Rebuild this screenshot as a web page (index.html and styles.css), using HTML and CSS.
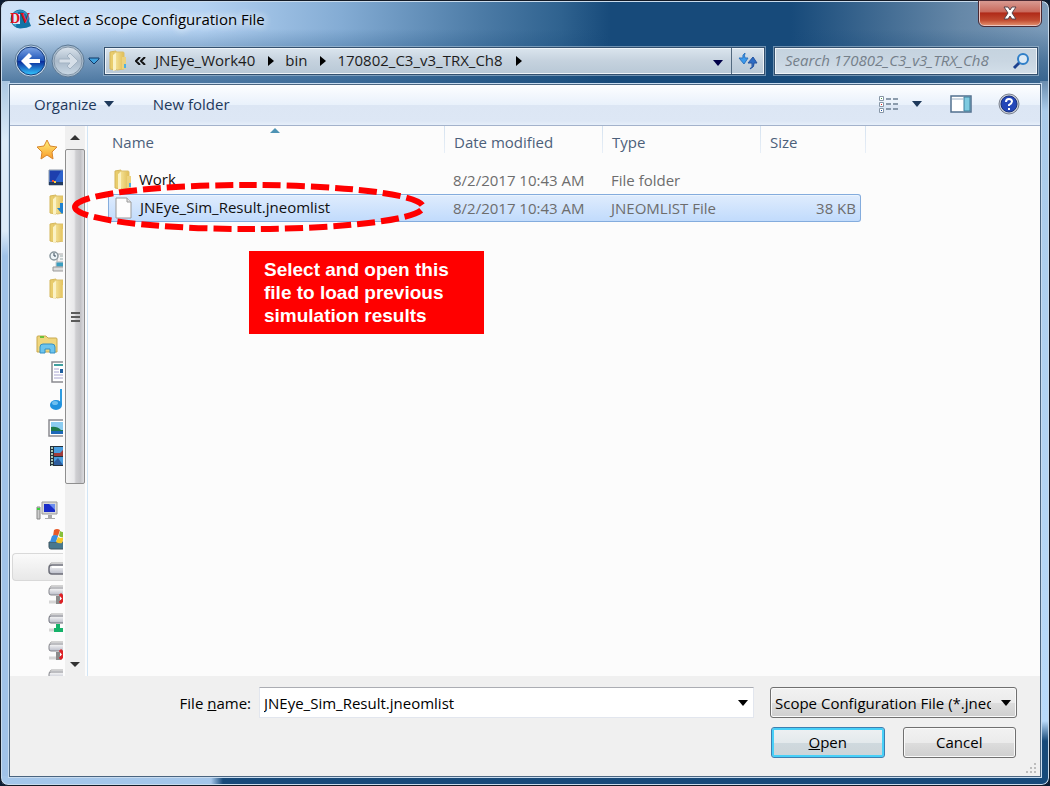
FILE: index.html
```
<!DOCTYPE html>
<html lang="en">
<head>
	<meta charset="UTF-8">
	<title>Select a Scope Configuration File</title>
	<link rel="stylesheet" href="styles.css">
</head>
<body>

<!-- shared icons -->
<svg class="defs" width="0" height="0" aria-hidden="true">
	<defs>
		<linearGradient id="gFolder" x1="0" x2="1"><stop offset="0" stop-color="#f7e7a0"/><stop offset="1" stop-color="#e0bd55"/></linearGradient>
		<linearGradient id="gBlue" x1="0" y1="0" x2="0" y2="1"><stop offset="0" stop-color="#7fa6e6"/><stop offset=".48" stop-color="#1f55b8"/><stop offset=".52" stop-color="#0a2c9c"/><stop offset="1" stop-color="#35c8ff"/></linearGradient>
		<linearGradient id="gGrey" x1="0" y1="0" x2="0" y2="1"><stop offset="0" stop-color="#dce5ee"/><stop offset=".5" stop-color="#a9b9c9"/><stop offset="1" stop-color="#c9d8e5"/></linearGradient>
		<linearGradient id="gStar" x1="0" y1="0" x2="0" y2="1"><stop offset="0" stop-color="#fff27a"/><stop offset="1" stop-color="#f99a2a"/></linearGradient>
		<linearGradient id="gDrive" x1="0" y1="0" x2="0" y2="1"><stop offset="0" stop-color="#fafafa"/><stop offset="1" stop-color="#b9bcc8"/></linearGradient>
	</defs>
	<symbol id="folder" viewBox="0 0 20 22">
		<path d="M2 2 8 1v19l-6-1z" fill="#e9cd6c" stroke="#d5b75a"/>
		<path d="M6 2h9q1 0 1 1v16l-7 1-3-2z" fill="url(#gFolder)" stroke="#dcc06a"/>
		<path d="M8 3v17l-3 1V5z" fill="#fbf2c4"/>
		<path d="M14 7h4v12h-4z" fill="#ecd27d"/>
		<path d="M16 14h2v4h-2z" fill="#4fb0e0"/>
	</symbol>
	<symbol id="drive" viewBox="0 0 22 22">
		<path d="M3 6h18v3H1z" fill="#f4f4f6" stroke="#aaa"/>
		<rect x="1" y="8" width="22" height="9" rx="3" fill="url(#gDrive)" stroke="#6c6e78" stroke-width="1.5"/>
		<path d="M4 10h18" stroke="#fff" stroke-width="2"/>
	</symbol>
	<symbol id="netoff" viewBox="0 0 22 22">
		<path d="M3 2h19v3H1z" fill="#f4f4f6" stroke="#aaa"/>
		<rect x="1" y="4" width="22" height="7" rx="2" fill="url(#gDrive)" stroke="#85868c"/>
		<path d="M10 12v5M8 18h5" stroke="#8b8b8b" stroke-width="4"/>
		<path d="M1 18h7" stroke="#d5d5d5" stroke-width="3"/>
		<path d="m12 10 8 9m0-9-8 9" stroke="#de2025" stroke-width="3"/>
	</symbol>
	<symbol id="neton" viewBox="0 0 22 22">
		<path d="M3 2h19v3H1z" fill="#f4f4f6" stroke="#aaa"/>
		<rect x="1" y="4" width="22" height="7" rx="2" fill="url(#gDrive)" stroke="#6c6e78"/>
		<path d="M10 12v5M6 18h14" stroke="#16b26a" stroke-width="4"/>
		<path d="M1 18h5" stroke="#d5d5d5" stroke-width="3"/>
	</symbol>
</svg>

<div class="window">
	<div class="titlebar">
		<svg class="app-icon" width="22" height="20" viewBox="0 0 22 20">
			<ellipse cx="10" cy="10" rx="9" ry="9" fill="#3ba0cc" stroke="#1c76a4"/>
			<path d="M8 3q6-2 9 4l4 10q-8 4-15 1z" fill="#1273a6"/>
			<path d="M2 5h8v10H3z" fill="#d9edf5"/>
			<text x="0" y="14" class="logo-text">DV</text>
		</svg>
		<h1>Select a Scope Configuration File</h1>
		<button class="close" aria-label="Close">
			<svg width="16" height="14" viewBox="0 0 16 14"><path d="M2 1h4l2 3 2-3h4l-4 6 4 6h-4l-2-3-2 3H2l4-6z" fill="#fff" stroke="#56434a"/></svg>
		</button>
	</div>

	<div class="navbar">
		<button class="round" aria-label="Back">
			<svg width="34" height="34" viewBox="0 0 34 34">
				<circle cx="17" cy="17" r="16" fill="#bfd4e8" stroke="#5b7894"/>
				<circle cx="17" cy="17" r="14" fill="url(#gBlue)" stroke="#173c7c"/>
				<path d="m7 17 8-8 3 3-3 3h11v4H15l3 3-3 3z" fill="#fff"/>
			</svg>
		</button>
		<button class="round" aria-label="Forward">
			<svg width="34" height="34" viewBox="0 0 34 34">
				<circle cx="17" cy="17" r="16" fill="#a9bccd" stroke="#5b7894"/>
				<circle cx="17" cy="17" r="14" fill="url(#gGrey)" stroke="#8496a8"/>
				<path d="m27 17-8-8-3 3 3 3H8v4h11l-3 3 3 3z" fill="#d6dfe8" stroke="#a3b3c3"/>
			</svg>
		</button>
		<button class="history" aria-label="Recent pages">
			<svg width="12" height="8" viewBox="0 0 12 8"><path d="M1 1h10v1L6 7 1 2z" fill="#3fa0dc" stroke="#123a68"/></svg>
		</button>
		<nav class="address">
			<svg class="addr-icon" width="20" height="22"><use href="#folder"/></svg>
			<svg class="more" width="11" height="8" viewBox="0 0 11 8"><path d="M5 0 1 4l4 4M10 0 6 4l4 4" fill="none" stroke="#111" stroke-width="2"/></svg>
			<a href="#">JNEye_Work40</a><i class="tri"></i>
			<a href="#">bin</a><i class="tri"></i>
			<a href="#">170802_C3_v3_TRX_Ch8</a><i class="tri"></i>
			<button class="addr-drop" aria-label="Previous locations"><i class="down"></i></button>
			<button class="refresh" aria-label="Refresh">
				<svg width="20" height="18" viewBox="0 0 20 18">
					<path d="M7 1Q4 3 5 6H1l5 6 4-6H7Q6 4 7 1z" fill="#3a9aee" stroke="#2c74c0"/>
					<path d="M12 17q3-2 2-6h-4l5-6 4 6h-3q1 4-4 6z" fill="#2c6cc4" stroke="#2353a0"/>
				</svg>
			</button>
		</nav>
		<div class="search">
			<input type="text" aria-label="Search" placeholder="Search 170802_C3_v3_TRX_Ch8">
			<svg width="18" height="18" viewBox="0 0 18 18">
				<path d="m2 16 6-6" stroke="#1c418f" stroke-width="3"/>
				<circle cx="11" cy="7" r="5" fill="#dbe9f5" stroke="#2f7fc8" stroke-width="2"/>
			</svg>
		</div>
	</div>

	<div class="client">
		<div class="toolbar">
			<button>Organize <i class="down"></i></button>
			<button>New folder</button>
			<button class="views" aria-label="Change your view">
				<svg width="20" height="17" viewBox="0 0 20 17">
					<g fill="#fff" stroke="#8796a6"><path d="M1.500.5h4v4h-4zM1.500 6.500h4v4h-4zM1.500 12.500h4v4h-4z"/></g>
					<path d="M3 2h1v1H3z" fill="#4a9a4a"/><path d="M3 8h1v1H3z" fill="#e02020"/><path d="M3 14h1v1H3z" fill="#2050a0"/>
					<path d="M8 3h5m2 0h5M8 8h5m2 0h5M8 13h5m2 0h5" stroke="#6c7f92" stroke-width="1.500"/>
				</svg>
				<i class="down"></i>
			</button>
			<button class="preview" aria-label="Show the preview pane">
				<svg width="22" height="18" viewBox="0 0 22 18">
					<path d="M1 1h20v16H1z" fill="#fff" stroke="#52708e" stroke-width="1.500"/>
					<path d="M2 4h11" stroke="#9cb0c4"/>
					<path d="M14 2h6v14h-6z" fill="#7fcbe0" stroke="#3f7f9c"/>
				</svg>
			</button>
			<button class="help" aria-label="Help">
				<svg width="22" height="22" viewBox="0 0 22 22">
					<circle cx="11" cy="11" r="10" fill="#c9cdd4" stroke="#7b8290"/>
					<circle cx="11" cy="11" r="8" fill="#2447b8" stroke="#17307e"/>
					<path d="M8 9q0-3 3-3t3 2.500q0 1.500-3 3.500v1" fill="none" stroke="#fff" stroke-width="2"/>
					<path d="M10 15h2v2h-2z" fill="#fff"/>
				</svg>
			</button>
		</div>

		<div class="panes">
			<div class="tree">
				<ul>
					<li class="root"><svg width="22" height="22" viewBox="0 0 22 22"><path d="m11 2 3 6 7 1-5 5 1 7-6-4-6 4 1-7-5-5 7-1z" fill="url(#gStar)" stroke="#d8862c"/></svg></li>
					<li><svg width="22" height="22" viewBox="0 0 22 22"><path d="M1 4h20v15H1z" fill="#2d62cc" stroke="#8a94a4"/><path d="M2 5h11L7 15H2z" fill="#1d3fae"/><path d="M1 16h20v3H1z" fill="#223a5e"/><path d="M4 14h2v2H4z" fill="#f05030"/><path d="M6 15h2v2H6z" fill="#f8d040"/></svg></li>
					<li><svg width="22" height="22" viewBox="0 0 22 22"><use href="#folder" width="20" height="22"/><path d="M12 9h4v5h3l-5 6-5-6h3z" fill="#1d80d0"/></svg></li>
					<li><svg width="22" height="22" viewBox="0 0 22 22"><use href="#folder" width="20" height="22"/></svg></li>
					<li><svg width="22" height="22" viewBox="0 0 22 22"><path d="M9 4h12v8H9z" fill="#f4f4f4" stroke="#aaa"/><path d="M12 6h8M12 9h8" stroke="#9aa"/><path d="M8 12h13v5H8z" fill="#3a9ec0" stroke="#ccc"/><path d="M5 17h16v4H5z" fill="#ddd" stroke="#999"/><circle cx="6" cy="6" r="4" fill="#eef5f8" stroke="#8a979e" stroke-width="1.500"/><path d="M6 3v3h2" fill="none" stroke="#345"/></svg></li>
					<li><svg width="22" height="22" viewBox="0 0 22 22"><use href="#folder" width="20" height="22"/></svg></li>
				</ul>
				<ul>
					<li class="root"><svg width="22" height="22" viewBox="0 0 22 22"><path d="M1 4q0-1 1-1h8l2 2h8q1 0 1 1v13H1z" fill="#efd67e" stroke="#c9a94e"/><path d="M4 4h4" stroke="#6cc03a" stroke-width="2"/><path d="M4 20v-6q0-3 3-3h9q3 0 3 3v6h-5v-4H9v4z" fill="#6cc4ee" stroke="#3490c4"/></svg></li>
					<li><svg width="22" height="22" viewBox="0 0 22 22"><path d="M4 1h18v20H4z" fill="#fff" stroke="#8a8a90" stroke-width="1.500"/><path d="M6 4h14" stroke="#40a0a0" stroke-width="2"/><path d="M6 8h5M6 11h5M6 14h14M6 17h14" stroke="#a8a4d0"/><path d="M12 8h8v4h-8z" fill="#2060a0"/></svg></li>
					<li><svg width="22" height="22" viewBox="0 0 22 22"><path d="M13 0v16" stroke="#2f9ce0" stroke-width="2"/><ellipse cx="8" cy="16" rx="6" ry="5" fill="#2192de"/><ellipse cx="7" cy="14" rx="3" ry="2" fill="#6fc0f0"/></svg></li>
					<li><svg width="22" height="22" viewBox="0 0 22 22"><path d="M1 3h22v16H1z" fill="#fff" stroke="#8a8a90" stroke-width="1.500"/><path d="M3 5h18v12H3z" fill="#8cccf0"/><path d="M3 10q6-1 10 3h8v2H3z" fill="#1e7a4a"/><path d="M3 14h18v3H3z" fill="#1d68b8"/></svg></li>
					<li><svg width="22" height="22" viewBox="0 0 22 22"><path d="M2 1h20v20H2z" fill="#25313c"/><path d="M6 2h14v8H6zM6 12h14v8H6z" fill="#4a9ee0"/><path d="M6 8h6l3-3v6H6z" fill="#a03c3c"/><path d="M6 17l4-4 5 7H6z" fill="#2d5c9c"/><path d="M4 2v19" stroke="#a8c8b8" stroke-width="2" stroke-dasharray="2 1"/></svg></li>
				</ul>
				<ul>
					<li class="root"><svg width="22" height="22" viewBox="0 0 22 22"><path d="M6 2h15v12H6z" fill="#d8d8d8" stroke="#999"/><path d="M8 4h11v8H8z" fill="#1a2cc8"/><path d="M13 4h6v6z" fill="#6a8cf0"/><path d="M12 15h4v3h3v1H9v-1h3z" fill="#aaa"/><path d="M1 7h3v12H1z" fill="#ccc" stroke="#888"/><path d="M1 9h3" stroke="#3ad03a" stroke-width="2"/></svg></li>
					<li><svg width="22" height="22" viewBox="0 0 22 22"><path d="M1 14h22v6q0 1-2 1H3q-2 0-2-2z" fill="#48788e" stroke="#3c5460"/><path d="M6 2q3-2 6 0l-2 6q-3-1-5 0z" fill="#e85a28"/><path d="M12 3q4 2 7 0l-2 6q-4 1-6-1z" fill="#86c03a"/><path d="M4 8q3-2 6 0l-2 6H2z" fill="#3a8ee0"/><path d="M10 9q3 2 6 0l-2 6q-3 1-6-1z" fill="#f8c828"/></svg></li>
					<li class="current"><svg width="22" height="22"><use href="#drive"/></svg></li>
					<li><svg width="22" height="22"><use href="#netoff"/></svg></li>
					<li><svg width="22" height="22"><use href="#neton"/></svg></li>
					<li><svg width="22" height="22"><use href="#netoff"/></svg></li>
					<li><svg width="22" height="22"><use href="#netoff"/></svg></li>
				</ul>
			</div>
			<div class="scrollbar">
				<i class="up"></i>
				<div class="thumb"><i></i><i></i><i></i></div>
				<i class="dn"></i>
			</div>

			<div class="files">
				<table>
					<colgroup><col class="c-name"><col class="c-date"><col class="c-type"><col class="c-size"></colgroup>
					<thead>
						<tr><th class="sorted">Name</th><th>Date modified</th><th>Type</th><th>Size</th></tr>
					</thead>
					<tbody>
						<tr>
							<td class="name"><svg width="20" height="22"><use href="#folder"/></svg>Work</td>
							<td>8/2/2017 10:43 AM</td><td>File folder</td><td class="size"></td>
						</tr>
						<tr class="selected">
							<td class="name"><svg width="20" height="22" viewBox="0 0 20 22"><path d="M2 1h11l4 4v16H2z" fill="#fdfdfd" stroke="#9a9a9a"/><path d="M13 1v4h4" fill="#e4e4e4" stroke="#9a9a9a"/></svg>JNEye_Sim_Result.jneomlist</td>
							<td>8/2/2017 10:43 AM</td><td>JNEOMLIST File</td><td class="size">38 KB</td>
						</tr>
					</tbody>
				</table>
				<svg class="ring" width="360" height="56" viewBox="0 0 360 56">
					<path d="M6 28A174 22 0 0 1 354 28A174 22 0 0 1 6 28" fill="none" stroke="#f00" stroke-width="6" stroke-dasharray="18 6"/>
				</svg>
				<p class="callout">Select and open this file to load previous simulation results</p>
			</div>
		</div>

		<form class="footer">
			<label for="filename">File <u>n</u>ame:</label>
			<div class="combo">
				<input type="text" id="filename" value="JNEye_Sim_Result.jneomlist">
				<button type="button" aria-label="Previous names"><i class="down"></i></button>
			</div>
			<div class="filter">
				<select aria-label="File type"><option>Scope Configuration File (*.jneomlist)</option></select>
				<i class="down"></i>
			</div>
			<div class="buttons">
				<button type="button" class="btn default"><u>O</u>pen</button>
				<button type="button" class="btn">Cancel</button>
			</div>
			<svg class="grip" width="11" height="11" viewBox="0 0 11 11"><path d="M8 0h2v2H8zM4 4h2v2H4zM8 4h2v2H8zM0 8h2v2H0zM4 8h2v2H4zM8 8h2v2H8z" fill="#bdbdbd"/></svg>
		</form>
	</div>
</div>

</body>
</html>
```
FILE: styles.css
```
* { box-sizing: border-box; }

body {
	margin: 0;
	background: #0c1d33;
	font: 15px/20px "Open Sans", "Noto Sans", sans-serif;
	color: #000;
}
button, input, select { font: inherit; color: inherit; }
button { padding: 0; border: 0; background: none; }
svg { display: block; flex: none; }
ul { list-style: none; margin: 0; padding: 0; }
.defs { position: absolute; }

/* glass frame */
.window {
	display: flex;
	flex-direction: column;
	height: 100vh;
	min-height: 480px;
	padding: 0 8px 8px;
	border: 1px solid #131a26;
	border-radius: 8px;
	box-shadow: inset 0 0 0 1px #c9dbec;
	background:
		linear-gradient(90deg, #a4c6ea 210px, #174a7a 222px) bottom / 100% 9px no-repeat,
		linear-gradient(#a9c6e2, #dcebf8 60px, #dcebf8 150px, #a0c2e8 175px) 0 80px / 9px 100% no-repeat,
		linear-gradient(#6b8dae, #aacbea 30px, #b9dafa 640px, #174a7a 660px) 100% 80px / 9px 100% no-repeat,
		linear-gradient(transparent 28px, #174a7a77 60px, #174a7aaa 80px) 0 0 / 100% 84px no-repeat,
		linear-gradient(90deg, #cfe3f8, #b4d2f2 200px, #84acd4 340px, #4c7ba6 480px, #2f628f 560px, #174a7a 610px, #174a7a 790px, #6688a8 960px, #7d9cba);
}

.titlebar {
	display: flex;
	align-items: center;
	height: 44px;
	padding-bottom: 8px;
}
.app-icon { margin-left: 1px; }
.logo-text { font: bold 14px "Liberation Serif", serif; fill: #e0101c; }
.titlebar h1 {
	flex: 1;
	margin: 0 0 0 6px;
	font-size: 15px;
	font-weight: normal;
	text-shadow: 0 0 8px #fff, 0 0 8px #fff;
}
.close {
	display: flex;
	align-items: center;
	justify-content: center;
	align-self: flex-start;
	width: 62px;
	height: 25px;
	border: 1px solid #eac4c0;
	border-top: 0;
	border-radius: 0 0 5px 5px;
	outline: 1px solid #4a2a34;
	background: linear-gradient(#d99a92, #c96a5c 45%, #b02a18 50%, #c04a30 80%, #e08a68);
}

.navbar {
	display: flex;
	align-items: center;
	height: 32px;
	padding: 0 3px 0 5px;
}
.round { margin-right: 3px; }
.history { margin-right: 4px; }
.address {
	display: flex;
	align-items: center;
	flex: 1;
	height: 28px;
	border: 1px solid #33506e;
	outline: 1px solid #a9bfd499;
	box-shadow: inset 0 0 0 1px #f0f4f8;
	background: linear-gradient(#dbe5ee, #c5d2de 50%, #b8c8d6);
}
.address a {
	padding-bottom: 2px;
	color: #1c1c1c;
	text-decoration: none;
	white-space: nowrap;
}
.addr-icon { margin: 0 7px 0 3px; }
.more { margin-right: 9px; }
.tri {
	margin: 0 11px 0 13px;
	border: 5px solid transparent;
	border-left: 6px solid #000;
	border-right: 0;
}
.down {
	display: inline-block;
	border: 5px solid transparent;
	border-top: 6px solid #000;
	border-bottom: 0;
}
.addr-drop { margin: 0 8px 0 auto; }
.addr-drop .down { border-top-color: #000048; vertical-align: middle; }
.refresh {
	display: flex;
	align-items: center;
	justify-content: center;
	align-self: stretch;
	width: 33px;
	border-left: 1px solid #52697f;
}
.search {
	display: flex;
	align-items: center;
	width: 264px;
	height: 28px;
	margin-left: 9px;
	padding-right: 7px;
	border: 1px solid #33506e;
	outline: 1px solid #a9bfd499;
	box-shadow: inset 0 0 0 1px #f0f4f8;
	background: linear-gradient(#c5d3df, #c9d6e2 50%, #d3dfe9);
}
.search input {
	flex: 1;
	min-width: 0;
	padding: 0 0 2px 10px;
	border: 0;
	background: none;
	font-style: italic;
}
.search input::placeholder { color: #75808a; }

.client {
	display: flex;
	flex-direction: column;
	flex: 1;
	min-height: 0;
	margin-top: 7px;
	border: 1px solid #4b6580;
	outline: 1px solid #c8dcf0;
	background: #fcfcfc;
}
.toolbar {
	display: flex;
	align-items: center;
	height: 41px;
	padding: 0 20px 2px 24px;
	border-bottom: 1px solid #a3b2cb;
	background: linear-gradient(#fdfeff, #e9f1fb 49%, #dce6f4 50%, #dde7f5 90%, #e6effa);
	color: #1e395b;
}
.toolbar button { display: flex; align-items: center; margin-right: 39px; }
.toolbar .down { margin-left: 7px; border-top-color: #1e395b; }
.toolbar .views { margin: 0 28px 0 auto; }
.toolbar .views .down { margin-left: 14px; }
.toolbar .preview { margin-right: 26px; }
.toolbar .help { margin-right: 0; }

.panes { display: flex; flex: 1; min-height: 0; }

/* navigation tree, only the icons fit */
.tree {
	width: 53px;
	padding-top: 9px;
	overflow: hidden;
}
.tree ul { margin-bottom: 27px; }
.tree li {
	height: 28px;
	padding: 3px 0 0 38px;
}
.tree li.root { padding-left: 26px; }
.tree li.current {
	margin-left: 2px;
	padding-left: 35px;
	border: 1px solid #d9d9d9;
	border-right: 0;
	border-radius: 4px 0 0 4px;
	background: linear-gradient(#fafafa, #e8e8e8);
}
.scrollbar {
	display: grid;
	grid-template-rows: 23px 335fr 168fr 24px;
	justify-items: center;
	align-items: center;
	width: 20px;
	margin-left: 2px;
	background: #f0f0f0;
}
.scrollbar .up, .scrollbar .dn { border: 5px solid transparent; }
.scrollbar .up { border-top: 0; border-bottom-color: #333; }
.scrollbar .dn { grid-row: 4; border-bottom: 0; border-top-color: #333; }
.thumb {
	display: flex;
	flex-direction: column;
	align-items: center;
	justify-content: center;
	gap: 2px;
	width: 100%;
	height: 100%;
	border: 1px solid #8f8f8f;
	border-radius: 2px;
	background: linear-gradient(90deg, #f4f4f4, #e9e9eb 45%, #cfcfd2 55%, #c2c2c6 80%, #dcdcdf);
}
.thumb i { width: 9px; height: 2px; background: #5a5a5a; }

.files {
	position: relative;
	flex: 1;
	margin-left: 2px;
	border-left: 1px solid #d2e5f5;
}
.files table {
	width: 753px;
	margin-left: 20px;
	table-layout: fixed;
	border-collapse: separate;
	border-spacing: 0;
}
.c-name { width: 337px; }
.c-date { width: 158px; }
.c-type { width: 158px; }
.c-size { width: 100px; }
.files th {
	position: relative;
	height: 40px;
	padding: 0 0 8px 9px;
	text-align: left;
	font-weight: normal;
	color: #4c607a;
}
.files th:first-child { padding-left: 4px; }
.files th::after {
	content: "";
	position: absolute;
	top: 0;
	right: 0;
	width: 1px;
	height: 27px;
	background: linear-gradient(#d5e2f0, #e8eff7);
}
.files th:last-child::after { right: -5px; }
.sorted::before {
	content: "";
	position: absolute;
	top: 2px;
	left: 162px;
	border: 5px solid transparent;
	border-top: 0;
	border-bottom-color: #4e93b4;
}
.files td {
	height: 28px;
	padding: 0 0 0 8px;
	border: 1px solid transparent;
	border-width: 1px 0;
	color: #6d6d6d;
	white-space: nowrap;
}
.files td.name { padding-left: 5px; color: #111; }
.name svg { display: inline-block; margin-right: 6px; vertical-align: middle; }
.files td.size { padding-right: 4px; text-align: right; }
.selected td {
	border-color: #84acdd;
	background: linear-gradient(#dfecfd, #c1dbfc);
	box-shadow: inset 0 1px #ebf4fe;
}
.selected td:first-child { border-left-width: 1px; border-radius: 3px 0 0 3px; }
.selected td:last-child { border-right-width: 1px; border-radius: 0 3px 3px 0; }

/* annotation over the list */
.ring { position: absolute; top: 53px; left: -19px; z-index: 1; }
.callout {
	position: absolute;
	top: 125px;
	left: 161px;
	width: 235px;
	margin: 0;
	padding: 7px 15px;
	background: #f00;
	color: #fff;
	font: bold 19px/23px "Liberation Sans", Arial, sans-serif;
}

.footer {
	position: relative;
	display: grid;
	grid-template-columns: 241px 1fr 247px;
	align-items: start;
	column-gap: 8px;
	row-gap: 9px;
	padding: 11px 23px 18px 0;
	background: #f0f0f0;
}
.footer label { padding-top: 6px; text-align: right; }
.combo {
	display: flex;
	align-items: center;
	height: 31px;
	margin-right: 8px;
	border: 1px solid #e2e6ee;
	border-top-color: #abadb3;
	background: #fff;
}
.combo input {
	flex: 1;
	min-width: 0;
	padding: 0 0 0 4px;
	border: 0;
	background: none;
}
.combo button { display: flex; margin-right: 5px; }
.filter { position: relative; }
.filter select {
	display: block;
	width: 100%;
	height: 31px;
	padding: 0 25px 0 4px;
	border: 1px solid #707070;
	border-radius: 3px;
	box-shadow: inset 0 0 0 1px #fafafa;
	background: linear-gradient(#f2f2f2, #ebebeb 50%, #dddddd 51%, #cfcfcf);
	appearance: none;
}
.filter .down {
	position: absolute;
	top: 13px;
	right: 6px;
	pointer-events: none;
}
.buttons {
	grid-column: 3;
	display: flex;
	gap: 18px;
	padding: 0 1px;
}
.btn {
	flex: 1;
	height: 31px;
	padding-bottom: 2px;
	border: 1px solid #707070;
	border-radius: 3px;
	box-shadow: inset 0 0 0 1px #fafafa;
	background: linear-gradient(#f2f2f2, #ebebeb 50%, #dddddd 51%, #cfcfcf);
}
.btn.default {
	border-color: #3c7fb1;
	box-shadow: inset 0 0 0 2px #48d0f8;
	background: linear-gradient(#eef1f3, #e3e9ec 50%, #cfd9de 51%, #ccd4d8);
}
.grip { position: absolute; right: 3px; bottom: 2px; }
```
